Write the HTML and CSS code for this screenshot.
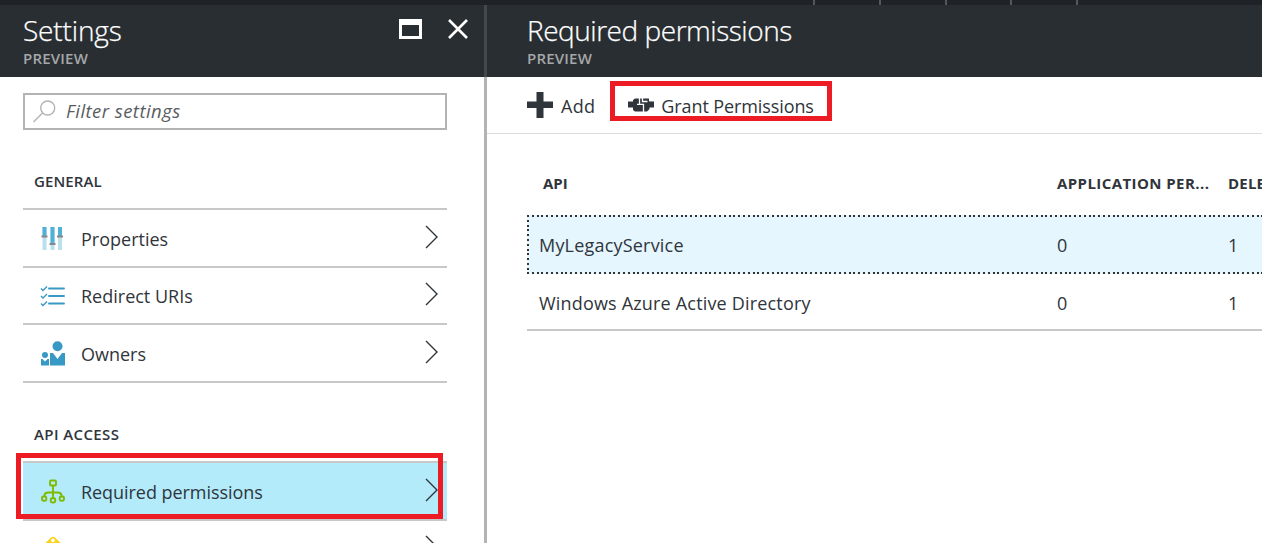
FILE: index.html
```html
<!DOCTYPE html>
<html lang="en">
<head>
<meta charset="utf-8">
<title>Settings - Required permissions</title>
<link rel="stylesheet" href="styles.css">
</head>
<body>
<div class="topbar"><i></i><i></i><i></i><i></i><i></i></div>
<div class="blades">
  <section class="blade settings">
    <header class="blade-head">
      <div><h1 class="t-settings">Settings</h1><p>PREVIEW</p></div>
      <div class="window-actions">
        <svg width="24" height="20" viewBox="0 0 24 20"><path fill="#fff" fill-rule="evenodd" d="M0 0h23v20H0zM3 6v11h17V6z"/></svg>
        <svg width="20" height="20" viewBox="0 0 20 20"><path stroke="#fff" stroke-width="2.6" d="M1 1l18 18M19 1L1 19"/></svg>
      </div>
    </header>
    <div class="settings-body">
      <div class="filter">
        <svg width="24" height="24" viewBox="0 0 24 24" fill="none" stroke="#b4b4b4" stroke-width="1.4"><circle cx="14.700" cy="8" r="7"/><path d="M9.500 13L.5 22"/></svg>
        <span class="t-filter">Filter settings</span>
      </div>
      <h2 class="t-general">GENERAL</h2>
      <ul>
        <li>
          <svg width="26" height="26" viewBox="0 0 26 26"><path fill="#b9e0ee" d="M2.500 1h4v23h-4zM10.500 1h4v23h-4zM18 1h4v23h-4z"/><path fill="#50b0d8" d="M2.500 1h4v9h-4zM10.500 1h4v17h-4zM18 1h4v9h-4z"/><path fill="#888" d="M1.500 9.500h6v2h-6zM9.500 17h6v2h-6zM17 9.500h6v2h-6z"/></svg>
          <span class="t-prop">Properties</span><svg class="chev" width="14" height="24" viewBox="0 0 14 24"><path d="M1 1l11 11L1 23"/></svg>
        </li>
        <li>
          <svg width="26" height="26" viewBox="0 0 26 26" fill="none" stroke="#3999c6"><path stroke-width="1.900" stroke-linecap="round" d="M9 5.500h15M9 13h15M9 20.500h15"/><path stroke-width="1.400" d="M1 5.500l2 2 4-4M1 13l2 2 4-4M1 20.500l2 2 4-4"/></svg>
          <span class="t-redir">Redirect URIs</span><svg class="chev" width="14" height="24" viewBox="0 0 14 24"><path d="M1 1l11 11L1 23"/></svg>
        </li>
        <li>
          <svg width="26" height="26" viewBox="0 0 26 26" fill="#3999c6"><circle cx="17.500" cy="5.200" r="5"/><path d="M10 12h3l4.500 6 4.500-6h3v12.500H10z"/><circle cx="5" cy="14" r="3"/><path d="M1 18h1.500L5 20.500 7.500 18H9v6.500H1z"/></svg>
          <span class="t-own">Owners</span><svg class="chev" width="14" height="24" viewBox="0 0 14 24"><path d="M1 1l11 11L1 23"/></svg>
        </li>
      </ul>
      <h2 class="t-access">API ACCESS</h2>
      <ul>
        <li class="selected">
          <svg width="26" height="26" viewBox="0 0 26 26" fill="none" stroke="#7fba00" stroke-width="1.900"><rect x="10" y="1.500" width="6" height="5" rx="1"/><path d="M13 6.500V19M4.500 17v-.5q0-3 4-3h9q4 0 4 3v.5"/><rect x="2" y="17.500" width="4.300" height="4.300" rx="1.500"/><rect x="10.700" y="19.200" width="4.600" height="4.300" rx="1.500"/><rect x="19.700" y="17.500" width="4.300" height="4.300" rx="1.500"/></svg>
          <span class="t-req">Required permissions</span><svg class="chev" width="14" height="24" viewBox="0 0 14 24"><path d="M1 1l11 11L1 23"/></svg>
        </li>
        <li>
          <svg width="26" height="26" viewBox="0 0 26 26"><path fill="#fcd116" fill-rule="evenodd" d="M5 7.500L11 1.500q2-1.500 4 0l6 6v5H5zM13 2.500a1.900 1.900 0 1 0 .01 0z"/></svg>
          <span></span><svg class="chev" width="14" height="24" viewBox="0 0 14 24"><path d="M1 1l11 11L1 23"/></svg>
        </li>
      </ul>
    </div>
    <div class="callout callout-row"></div>
  </section>
  <section class="blade permissions">
    <header class="blade-head"><div><h1 class="t-perm">Required permissions</h1><p>PREVIEW</p></div></header>
    <div class="toolbar">
      <svg width="26" height="26" viewBox="0 0 26 26"><path fill="#2f353b" d="M9.500 0h7v9.500H26v6.500h-9.500V26h-7V16H0V9.500h9.500z"/></svg>
      <span class="t-add">Add</span>
      <svg class="grant-icon" width="26" height="14" viewBox="0 0 26 14"><path fill="#2f353b" d="M0 3.500h5V2l2-1.500h17V3.500h2v6h-4.500V11L19 13.500H7L5 12v-2.500H0z"/><path fill="none" stroke="#fff" stroke-width="1.300" d="M11.500 0v6.300h4V14M9 6.300h3M14.500 0v3.500h5"/><path fill="#fff" d="M21 0h3v3.400h-3z"/></svg>
      <span class="t-grant">Grant Permissions</span>
      <div class="callout callout-grant"></div>
    </div>
    <div class="grid">
      <div class="row head"><span class="t-api">API</span><span class="t-app">APPLICATION PER...</span><span class="t-del">DELE</span></div>
      <div class="row focused"><span class="t-legacy">MyLegacyService</span><span>0</span><span>1</span></div>
      <div class="row last"><span class="t-waad">Windows Azure Active Directory</span><span>0</span><span>1</span></div>
    </div>
  </section>
</div>
</body>
</html>
```
FILE: styles.css
```css
* { box-sizing: border-box; }
body { margin: 0; width: 1262px; height: 543px; overflow: hidden; background: #fff; color: #2f353b; font: 18px/24px "Open Sans", "Noto Sans", sans-serif; }
h1, h2, p, ul { margin: 0; padding: 0; }
svg { display: block; flex: none; }
span, h1, h2 { white-space: nowrap; }
.topbar { height: 5px; background: #1f2328; display: flex; padding-left: 813px; gap: 63.750px; }
.topbar i { width: 2px; background: #555859; }
.blades { display: flex; height: 538px; }
.blade { position: relative; overflow: hidden; }
.settings { width: 487px; flex: none; background: linear-gradient(#43484b 72px, #b3b3b3 72px) right / 3px 100% no-repeat; }
.permissions { flex: 1; }
.blade-head { height: 72px; background: #292e32; color: #fff; display: flex; justify-content: space-between; padding: 6px 0 0 23px; }
.settings .blade-head { margin-right: 3px; }
.permissions .blade-head { padding-left: 40px; }
h1 { font-size: 28px; line-height: 38px; font-weight: 300; -webkit-text-stroke: .25px #fff; }
.t-settings { letter-spacing: -.15px; }
.t-perm { letter-spacing: -.47px; }
.blade-head p { font-size: 15px; line-height: 18px; font-weight: 600; color: #a5a7a9; letter-spacing: .2px; }
.window-actions { display: flex; gap: 25px; padding: 8px 16px 0 0; }
.settings-body { padding: 16px 40px 0 23px; }
.filter { height: 37px; border: 2px solid #b3b3b3; display: flex; align-items: center; padding-left: 8px; gap: 9px; font-style: italic; color: #595d62; }
.t-filter { font-size: 18.500px; letter-spacing: .45px; margin-top: -2px; }
h2 { font-size: 15px; line-height: 20px; font-weight: 600; padding-left: 11px; }
.t-general { margin: 41px 0 17px; letter-spacing: .1px; }
.t-access { margin: 41px 0 17px; letter-spacing: .4px; }
ul { list-style: none; border-top: 2px solid #c8c8c8; }
li { height: 57.670px; border-bottom: 2px solid #c8c8c8; display: flex; align-items: center; padding: 2px 8px 0 17px; }
li span { flex: 1; padding-left: 15px; }
.t-req { letter-spacing: -.05px; }
.chev { fill: none; stroke: #2f353b; stroke-width: 1.4; margin-top: -4px; }
li.selected { background: #b3ebfb; }
.callout { position: absolute; border: 5px solid #ed1c24; }
.callout-row { left: 16px; top: 448px; width: 427px; height: 66px; }
.toolbar { position: relative; height: 57px; border-bottom: 1px solid #dcdcdc; display: flex; align-items: center; padding-left: 40px; }
.toolbar span { padding-left: 8px; padding-top: 2px; }
.toolbar .t-add { letter-spacing: .3px; }
.toolbar .t-grant { padding-left: 7px; letter-spacing: -.1px; }
.toolbar .grant-icon { margin-left: 33px; }
.callout-grant { left: 123px; top: 4px; width: 222px; height: 40px; }
.grid { margin-left: 40px; padding-top: 32px; }
.row { display: grid; grid-template-columns: 518px 171px 300px; align-items: center; height: 57px; padding-left: 12px; }
.head { height: 49px; padding-left: 16px; grid-template-columns: 514px 171px 300px; align-items: start; padding-top: 5px; font-size: 15px; font-weight: 700; }
.t-app { letter-spacing: .42px; }
.t-del { letter-spacing: .2px; }
.t-legacy { letter-spacing: .2px; }
.t-waad { letter-spacing: .18px; }
.focused { height: 59px; padding-top: 0; background:
  repeating-linear-gradient(90deg, #333 0 2px, transparent 2px 4.800px) 0 0 / 100% 2px no-repeat,
  repeating-linear-gradient(90deg, #333 0 2px, transparent 2px 4.800px) 0 100% / 100% 2px no-repeat,
  repeating-linear-gradient(#333 0 2px, transparent 2px 4.800px) 0 0 / 2px 100% no-repeat,
  #e5f6fe; }
.last { border-bottom: 2px solid #c8c8c8; padding-top: 2px; }
```
